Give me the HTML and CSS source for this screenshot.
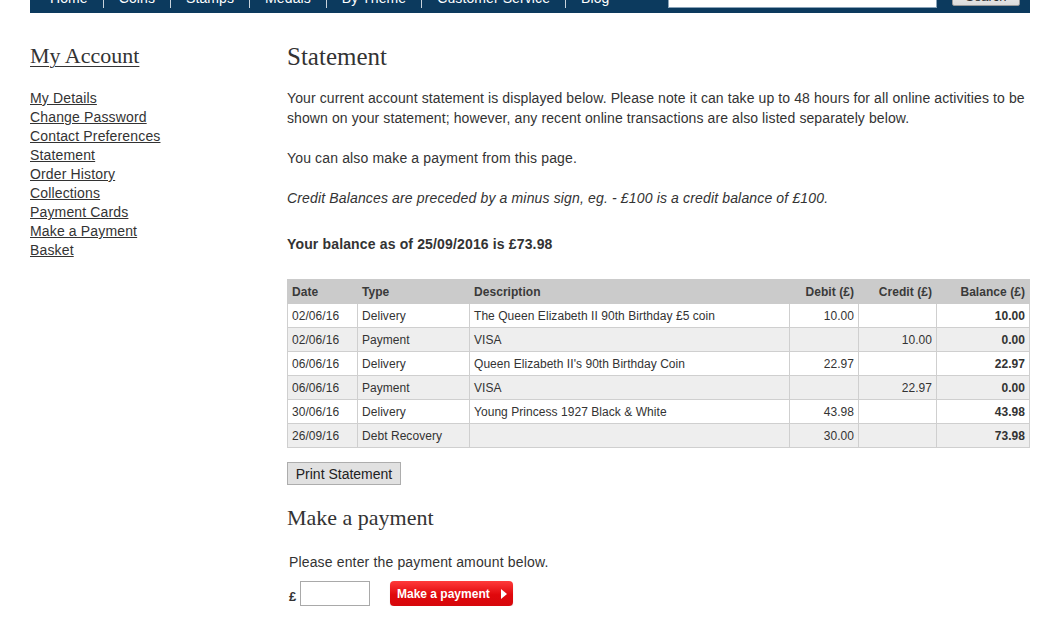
FILE: index.html
```html
<!DOCTYPE html>
<html lang="en">
<head>
<meta charset="utf-8">
<title>Statement</title>
<link rel="stylesheet" href="styles.css">
</head>
<body>
<div class="page">
  <div class="topbar">
    <ul class="nav">
      <li>Home</li>
      <li>Coins</li>
      <li>Stamps</li>
      <li>Medals</li>
      <li>By Theme</li>
      <li>Customer Service</li>
      <li>Blog</li>
    </ul>
    <div class="search">
      <input class="search-input" type="text">
      <button class="search-btn">Search</button>
    </div>
  </div>

  <div class="layout">
    <aside class="sidebar">
      <h2 class="side-title">My Account</h2>
      <ul class="side-links">
        <li><a href="#">My Details</a></li>
        <li><a href="#">Change Password</a></li>
        <li><a href="#">Contact Preferences</a></li>
        <li><a href="#">Statement</a></li>
        <li><a href="#">Order History</a></li>
        <li><a href="#">Collections</a></li>
        <li><a href="#">Payment Cards</a></li>
        <li><a href="#">Make a Payment</a></li>
        <li><a href="#">Basket</a></li>
      </ul>
    </aside>

    <main class="main">
      <h1 class="title">Statement</h1>
      <p class="intro">Your current account statement is displayed below. Please note it can take up to 48 hours for all online activities to be shown on your statement; however, any recent online transactions are also listed separately below.</p>
      <p class="para">You can also make a payment from this page.</p>
      <p class="para note">Credit Balances are preceded by a minus sign, eg. - £100 is a credit balance of £100.</p>
      <p class="balance">Your balance as of 25/09/2016 is £73.98</p>

      <table class="statement">
        <colgroup>
          <col class="c-date"><col class="c-type"><col class="c-desc"><col class="c-debit"><col class="c-credit"><col class="c-bal">
        </colgroup>
        <thead>
          <tr>
            <th>Date</th><th>Type</th><th>Description</th><th class="num">Debit (£)</th><th class="num">Credit (£)</th><th class="num">Balance (£)</th>
          </tr>
        </thead>
        <tbody>
          <tr><td>02/06/16</td><td>Delivery</td><td>The Queen Elizabeth II 90th Birthday £5 coin</td><td class="num">10.00</td><td class="num"></td><td class="num bal">10.00</td></tr>
          <tr class="alt"><td>02/06/16</td><td>Payment</td><td>VISA</td><td class="num"></td><td class="num">10.00</td><td class="num bal">0.00</td></tr>
          <tr><td>06/06/16</td><td>Delivery</td><td>Queen Elizabeth II's 90th Birthday Coin</td><td class="num">22.97</td><td class="num"></td><td class="num bal">22.97</td></tr>
          <tr class="alt"><td>06/06/16</td><td>Payment</td><td>VISA</td><td class="num"></td><td class="num">22.97</td><td class="num bal">0.00</td></tr>
          <tr><td>30/06/16</td><td>Delivery</td><td>Young Princess 1927 Black &amp; White</td><td class="num">43.98</td><td class="num"></td><td class="num bal">43.98</td></tr>
          <tr class="alt"><td>26/09/16</td><td>Debt Recovery</td><td></td><td class="num">30.00</td><td class="num"></td><td class="num bal">73.98</td></tr>
        </tbody>
      </table>

      <button class="print-btn">Print Statement</button>

      <h2 class="subtitle">Make a payment</h2>
      <p class="pay-note">Please enter the payment amount below.</p>
      <div class="pay-row">
        <span class="pound">£</span>
        <input class="amount" type="text">
        <button class="pay-btn">Make a payment <span class="arrow"></span></button>
      </div>
    </main>
  </div>
</div>
</body>
</html>
```

FILE: styles.css
```css
html, body {
  margin: 0;
  padding: 0;
  background: #fff;
}

body {
  font-family: "Liberation Sans", Arial, sans-serif;
  color: #333;
}

.page {
  width: 1000px;
  margin-left: 30px;
}

/* Top navigation bar (scrolled, partially hidden) */
.topbar {
  height: 13px;
  background: #0c3a5e;
  overflow: hidden;
  display: flex;
  align-items: flex-start;
  padding: 0 10px 0 5px;
}

.nav {
  list-style: none;
  margin: -11px 0 0 0;
  padding: 0;
  display: flex;
}

.nav li {
  color: #fff;
  font-size: 14px;
  line-height: 18px;
  padding: 0 15px 1px;
  border-left: 1px solid #c9d3dc;
  white-space: nowrap;
  letter-spacing: 0.1px;
}

.nav li:first-child {
  border-left: none;
}

.search {
  margin-left: auto;
  display: flex;
  gap: 15px;
  margin-top: -14px;
}

.search-input {
  width: 269px;
  height: 22px;
  box-sizing: border-box;
  border: 1px solid #8aa3b8;
  background: #fff;
  margin: 0;
}

.search-btn {
  width: 68px;
  height: 20px;
  box-sizing: border-box;
  margin: 0;
  border: 1px solid #999;
  border-radius: 2px;
  background: linear-gradient(#f4f4f4, #dcdcdc);
  font-family: "Liberation Sans", Arial, sans-serif;
  font-size: 13px;
  color: #333;
  padding: 0;
}

/* Layout */
.layout {
  display: flex;
}

.sidebar {
  width: 257px;
  flex: none;
}

.side-title {
  font-family: "Liberation Serif", "Times New Roman", serif;
  font-weight: normal;
  font-size: 22px;
  line-height: 30px;
  margin: 28px 0 0;
  color: #333;
  text-decoration: underline;
  text-underline-offset: 3px;
  text-decoration-thickness: 1px;
}

.side-links {
  list-style: none;
  margin: 18px 0 0;
  padding: 0;
}

.side-links li {
  font-size: 14px;
  line-height: 19px;
  letter-spacing: 0.15px;
}

.side-links a {
  color: #333;
  text-decoration: underline;
}

.main {
  width: 742px;
  flex: none;
}

.title {
  font-family: "Liberation Serif", "Times New Roman", serif;
  font-weight: normal;
  font-size: 25px;
  line-height: 30px;
  margin: 29px 0 0;
  color: #333;
}

.intro, .para {
  font-size: 14px;
  line-height: 20px;
  margin: 0;
  letter-spacing: 0.15px;
}

.intro {
  margin-top: 16px;
  letter-spacing: 0.1px;
}

.para {
  margin-top: 20px;
}

.note {
  font-style: italic;
}

.balance {
  font-size: 14px;
  line-height: 20px;
  font-weight: bold;
  margin: 26px 0 0;
  letter-spacing: 0.15px;
}

/* Statement table */
.statement {
  margin-top: 25px;
  width: 742px;
  border-collapse: collapse;
  table-layout: fixed;
  font-size: 12px;
  color: #333;
  letter-spacing: 0.05px;
}

.c-date { width: 70px; }
.c-type { width: 112px; }
.c-desc { width: 320px; }
.c-debit { width: 69px; }
.c-credit { width: 78px; }
.c-bal { width: 93px; }

.statement th {
  background: #cbcbcb;
  font-weight: bold;
  text-align: left;
  height: 24px;
  padding: 0 4px;
  color: #3a3a3a;
  border: 1px solid #cbcbcb;
  box-sizing: border-box;
}

.statement td {
  height: 24px;
  padding: 0 4px;
  border: 1px solid #cfcfcf;
  background: #fff;
  white-space: nowrap;
  box-sizing: border-box;
}

.statement tr.alt td {
  background: #eeeeee;
}

.statement .num {
  text-align: right;
}

.statement .bal {
  font-weight: bold;
}

/* Buttons and payment */
.print-btn {
  display: block;
  margin-top: 14px;
  width: 114px;
  height: 23px;
  padding: 0;
  box-sizing: border-box;
  border: 1px solid #adadad;
  border-radius: 0;
  background: #e1e1e1;
  font-family: "Liberation Sans", Arial, sans-serif;
  font-size: 14px;
  color: #222;
}

.subtitle {
  font-family: "Liberation Serif", "Times New Roman", serif;
  font-weight: normal;
  font-size: 22px;
  line-height: 30px;
  margin: 18px 0 0;
  color: #333;
}

.pay-note {
  font-size: 14px;
  line-height: 20px;
  margin: 19px 0 0 2px;
  letter-spacing: 0.15px;
}

.pay-row {
  display: flex;
  align-items: center;
  margin: 9px 0 0 2px;
  height: 25px;
}

.pound {
  font-size: 13px;
  font-weight: bold;
  width: 11px;
  margin-top: 5px;
}

.amount {
  width: 70px;
  height: 25px;
  box-sizing: border-box;
  border: 1px solid #a9a9a9;
  margin: 0;
  padding: 0 2px;
}

.pay-btn {
  margin-left: 20px;
  width: 123px;
  height: 25px;
  box-sizing: border-box;
  border: none;
  border-radius: 4px;
  background: linear-gradient(#ff3b3b, #e0080c 55%, #d6070b);
  color: #fff;
  font-family: "Liberation Sans", Arial, sans-serif;
  font-size: 12px;
  font-weight: bold;
  padding: 0 0 0 7px;
  display: flex;
  align-items: center;
  gap: 11px;
  box-shadow: 0 1px 1px rgba(0,0,0,0.2);
}

.arrow {
  width: 0;
  height: 0;
  border-top: 5px solid transparent;
  border-bottom: 5px solid transparent;
  border-left: 6px solid #fff;
}
```
